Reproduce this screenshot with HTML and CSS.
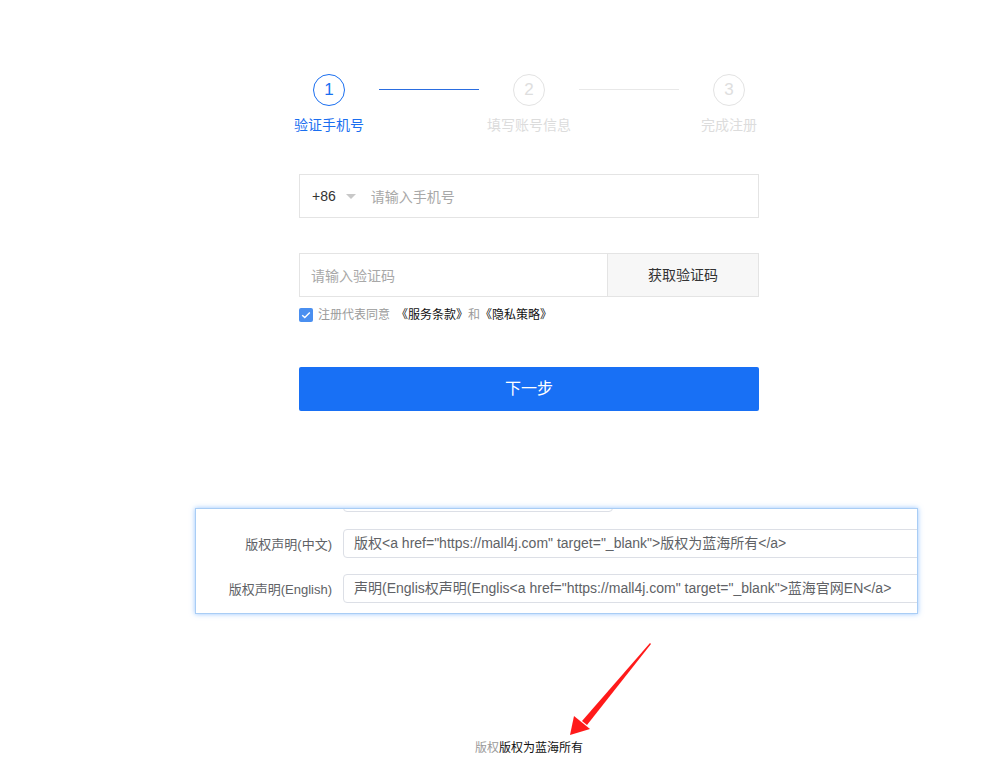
FILE: index.html
```html
<!DOCTYPE html>
<html lang="zh-CN">
<head>
<meta charset="utf-8">
<title>注册</title>
<link rel="stylesheet" href="styles.css">
</head>
<body>
<div class="page">
  <div class="steps">
    <div class="step active">
      <div class="circle">1</div>
      <div class="step-label">验证手机号</div>
    </div>
    <div class="line active"></div>
    <div class="step">
      <div class="circle">2</div>
      <div class="step-label">填写账号信息</div>
    </div>
    <div class="line"></div>
    <div class="step">
      <div class="circle">3</div>
      <div class="step-label">完成注册</div>
    </div>
  </div>

  <div class="form">
    <div class="field phone">
      <span class="code">+86</span>
      <span class="caret"></span>
      <span class="placeholder">请输入手机号</span>
    </div>
    <div class="field-row">
      <div class="field sms"><span class="placeholder">请输入验证码</span></div>
      <div class="sms-btn">获取验证码</div>
    </div>
    <div class="agree">
      <span class="checkbox"><svg width="10" height="8" viewBox="0 0 10 8"><path d="M1.2 4.2 L3.8 6.6 L8.8 1.4" fill="none" stroke="#fff" stroke-width="1.4"/></svg></span>
      <span class="muted lead">注册代表同意</span>
      <span class="link">《服务条款》</span><span class="muted">和</span><span class="link">《隐私策略》</span>
    </div>
    <div class="next-btn">下一步</div>
  </div>

  <div class="shot">
    <div class="shot-cut"></div>
    <div class="shot-row">
      <div class="shot-label">版权声明(中文)</div>
      <div class="shot-input">版权&lt;a href="https://mall4j.com" target="_blank"&gt;版权为蓝海所有&lt;/a&gt;</div>
    </div>
    <div class="shot-row">
      <div class="shot-label">版权声明(English)</div>
      <div class="shot-input">声明(Englis权声明(Englis&lt;a href="https://mall4j.com" target="_blank"&gt;蓝海官网EN&lt;/a&gt;</div>
    </div>
  </div>

  <div class="footer"><span class="muted">版权</span>版权为蓝海所有</div>

  <svg class="arrow" width="100" height="110" viewBox="0 0 100 110">
    <polygon points="90,3 91,4 27,85 22,81" fill="#ff1a1a"/>
    <polygon points="10,95 14,76 30,89" fill="#ff1a1a"/>
  </svg>
</div>
</body>
</html>
```

FILE: styles.css
```css
html, body {
  margin: 0;
  padding: 0;
  background: #ffffff;
}

body {
  font-family: "Liberation Sans", "Noto Sans CJK SC", sans-serif;
  color: #333333;
}

.page {
  position: relative;
  width: 987px;
  height: 784px;
  overflow: hidden;
}

/* Steps */
.steps {
  display: flex;
  align-items: flex-start;
  margin-left: 279px;
  padding-top: 74px;
}

.step {
  width: 100px;
  display: flex;
  flex-direction: column;
  align-items: center;
}

.circle {
  box-sizing: border-box;
  width: 32px;
  height: 32px;
  border-radius: 50%;
  border: 1px solid #e3e3e3;
  color: #dedede;
  font-size: 17px;
  line-height: 30px;
  text-align: center;
}

.step-label {
  margin-top: 9px;
  font-size: 14px;
  line-height: 20px;
  color: #dcdcdc;
  white-space: nowrap;
}

.step.active .circle {
  border-color: #1a6ff0;
  color: #1a6ff0;
}

.step.active .step-label {
  color: #1a6ff0;
}

.line {
  width: 100px;
  height: 1px;
  margin-top: 15px;
  background: #e8e8e8;
}

.line.active {
  background: #2a6de0;
}

/* Form */
.form {
  width: 460px;
  margin-left: 299px;
  margin-top: 39px;
}

.field {
  box-sizing: border-box;
  height: 44px;
  border: 1px solid #e4e4e4;
  display: flex;
  align-items: center;
  font-size: 14px;
}

.phone {
  padding-left: 12px;
}

.code {
  color: #333333;
}

.caret {
  width: 0;
  height: 0;
  border-left: 5px solid transparent;
  border-right: 5px solid transparent;
  border-top: 5px solid #c8c8c8;
  margin-left: 10px;
  margin-right: 15px;
}

.placeholder {
  color: #a8a8a8;
}

.field-row {
  display: flex;
  margin-top: 35px;
}

.sms {
  flex: 1;
  padding-left: 11px;
  border-right: none;
}

.sms-btn {
  box-sizing: border-box;
  width: 152px;
  height: 44px;
  border: 1px solid #e4e4e4;
  background: #f7f7f7;
  font-size: 14px;
  line-height: 42px;
  text-align: center;
  color: #333333;
}

.agree {
  display: flex;
  align-items: center;
  margin-top: 10px;
  font-size: 12px;
  line-height: 16px;
}

.checkbox {
  box-sizing: border-box;
  width: 14px;
  height: 14px;
  border-radius: 2px;
  background: #4a8ff0;
  display: flex;
  align-items: center;
  justify-content: center;
  margin-right: 5px;
}

.muted {
  color: #9a9a9a;
}

.agree .lead {
  margin-right: 6px;
}

.link {
  color: #111111;
}

.next-btn {
  margin-top: 44px;
  height: 44px;
  background: #1870f5;
  border-radius: 2px;
  color: #ffffff;
  font-size: 16px;
  line-height: 44px;
  text-align: center;
}

/* Embedded screenshot panel */
.shot {
  box-sizing: border-box;
  width: 723px;
  height: 106px;
  margin-left: 195px;
  margin-top: 97px;
  border: 1px solid #a9cdf5;
  box-shadow: 0 0 5px rgba(64, 150, 255, 0.55);
  background: #ffffff;
  overflow: hidden;
}

.shot-cut {
  box-sizing: border-box;
  width: 270px;
  height: 30px;
  margin-top: -27px;
  margin-left: 147px;
  border: 1px solid #dcdfe6;
  border-radius: 4px;
}

.shot-row {
  display: flex;
  align-items: center;
  margin-top: 17px;
  height: 29px;
}

.shot-row + .shot-row {
  margin-top: 16px;
}

.shot-label {
  box-sizing: border-box;
  flex: 0 0 147px;
  text-align: right;
  font-size: 13px;
  color: #606266;
  padding-right: 11px;
  white-space: nowrap;
}

.shot-input {
  box-sizing: border-box;
  flex: 0 0 640px;
  height: 29px;
  border: 1px solid #dcdfe6;
  border-radius: 4px;
  padding-left: 10px;
  font-size: 14px;
  line-height: 27px;
  color: #606266;
  white-space: nowrap;
}

.footer {
  width: 460px;
  margin-left: 299px;
  margin-top: 126px;
  text-align: center;
  font-size: 12px;
  line-height: 16px;
  color: #111111;
}

.arrow {
  position: absolute;
  left: 560px;
  top: 640px;
}
```
